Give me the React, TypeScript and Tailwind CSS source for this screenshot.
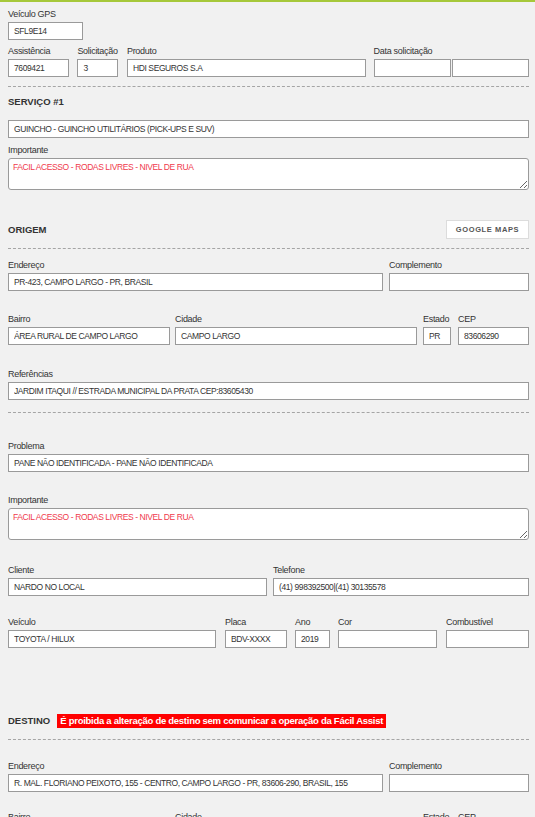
import React from 'react';

const labelCls = "h-[13px] mb-[3px] text-[9px] tracking-[-0.3px] leading-[16px] text-[#333] whitespace-nowrap";
const inputCls = "block w-full h-[18px] border border-[#9a9a9a] bg-white px-[5px] text-[8.5px] tracking-[-0.4px] text-[#333] outline-none";

interface FieldProps {
  label?: string;
  value?: string;
  className?: string;
}

const Field: React.FC<FieldProps> = ({ label, value = '', className = '' }) => (
  <div className={className}>
    {label !== undefined && <div className={labelCls}>{label}</div>}
    <input readOnly value={value} className={inputCls} />
  </div>
);

const Dashed: React.FC<{ className?: string }> = ({ className = '' }) => (
  <div className={`border-t border-dashed border-[#a5a5a5] ${className}`} />
);

const Heading: React.FC<{ children: React.ReactNode }> = ({ children }) => (
  <span className="text-[9.5px] font-bold text-[#333] leading-[14px]">
    {children}
  </span>
);

const Note: React.FC<{ text: string }> = ({ text }) => (
  <textarea
    readOnly
    value={text}
    className="block w-full h-[32px] border border-[#9a9a9a] rounded-[3px] bg-white px-[4px] py-[2px] text-[8.5px] tracking-[-0.4px] text-[#f03a4c] outline-none"
  />
);

export default function App() {
  return (
    <div className="min-h-screen bg-[#f1f1f1] border-t-2 border-[#a6c83a] pt-[4px] pl-[8px] pr-[6px] font-['Liberation_Sans',sans-serif] overflow-hidden">
      {/* Topo */}
      <Field label="Veículo GPS" value="SFL9E14" className="w-[75px]" />

      <div className="flex mt-[3px] items-end">
        <Field label="Assistência" value="7609421" className="w-[62px]" />
        <Field label="Solicitação" value="3" className="w-[41px] ml-[8px]" />
        <Field label="Produto" value="HDI SEGUROS S.A" className="w-[241px] ml-[9px]" />
        <Field label="Data solicitação" className="w-[78px] ml-[8px]" />
        <Field className="w-[78px] ml-[1px]" />
      </div>

      <Dashed className="mt-[9px]" />

      {/* Serviço */}
      <div className="mt-[8px] h-[14px] flex items-center">
        <Heading>SERVIÇO #1</Heading>
      </div>
      <Field value="GUINCHO - GUINCHO UTILITÁRIOS (PICK-UPS E SUV)" className="mt-[11px]" />

      <div className="mt-[4px]">
        <div className={labelCls}>Importante</div>
        <Note text="FACIL ACESSO - RODAS LIVRES - NIVEL DE RUA" />
      </div>

      {/* Origem */}
      <div className="mt-[30px] flex items-center justify-between">
        <Heading>ORIGEM</Heading>
        <button className="w-[83px] h-[19px] bg-white border border-[#dcdcdc] text-[7.5px] font-bold tracking-[0.6px] text-[#555]">
          GOOGLE MAPS
        </button>
      </div>

      <Dashed className="mt-[9px]" />

      <div className="flex mt-[8px]">
        <Field label="Endereço" value="PR-423, CAMPO LARGO - PR, BRASIL" className="w-[375px]" />
        <Field label="Complemento" className="flex-1 ml-[6px]" />
      </div>

      <div className="flex mt-[20px]">
        <Field label="Bairro" value="ÁREA RURAL DE CAMPO LARGO" className="w-[162px]" />
        <Field label="Cidade" value="CAMPO LARGO" className="w-[242px] ml-[5px]" />
        <Field label="Estado" value="PR" className="w-[28px] ml-[6px]" />
        <Field label="CEP" value="83606290" className="flex-1 ml-[7px]" />
      </div>

      <Field label="Referências" value="JARDIM ITAQUI // ESTRADA MUNICIPAL DA PRATA CEP:83605430" className="mt-[21px]" />

      <Dashed className="mt-[12px]" />

      {/* Problema */}
      <Field label="Problema" value="PANE NÃO IDENTIFICADA - PANE NÃO IDENTIFICADA" className="mt-[25px]" />

      <div className="mt-[20px]">
        <div className={labelCls}>Importante</div>
        <Note text="FACIL ACESSO - RODAS LIVRES - NIVEL DE RUA" />
      </div>

      <div className="flex mt-[22px]">
        <Field label="Cliente" value="NARDO NO LOCAL" className="w-[259px]" />
        <Field label="Telefone" value="(41) 998392500|(41) 30135578" className="flex-1 ml-[6px]" />
      </div>

      <div className="flex mt-[18px]">
        <Field label="Veículo" value="TOYOTA / HILUX" className="w-[208px]" />
        <Field label="Placa" value="BDV-XXXX" className="w-[62px] ml-[9px]" />
        <Field label="Ano" value="2019" className="w-[35px] ml-[8px]" />
        <Field label="Cor" className="w-[99px] ml-[8px]" />
        <Field label="Combustível" className="flex-1 ml-[9px]" />
      </div>

      {/* Destino */}
      <div className="mt-[66px] h-[14px] flex items-center">
        <Heading>DESTINO</Heading>
        <span className="ml-[7px] h-[14px] px-[3px] bg-[#ff0000] text-white font-bold text-[9.5px] tracking-[-0.27px] leading-[14px] whitespace-nowrap">
          É proibida a alteração de destino sem comunicar a operação da Fácil Assist
        </span>
      </div>

      <Dashed className="mt-[11px]" />

      <div className="flex mt-[18px]">
        <Field label="Endereço" value="R. MAL. FLORIANO PEIXOTO, 155 - CENTRO, CAMPO LARGO - PR, 83606-290, BRASIL, 155" className="w-[375px]" />
        <Field label="Complemento" className="flex-1 ml-[6px]" />
      </div>

      <div className="flex mt-[17px]">
        <Field label="Bairro" className="w-[162px]" />
        <Field label="Cidade" className="w-[242px] ml-[5px]" />
        <Field label="Estado" className="w-[28px] ml-[6px]" />
        <Field label="CEP" className="flex-1 ml-[7px]" />
      </div>
    </div>
  );
}
